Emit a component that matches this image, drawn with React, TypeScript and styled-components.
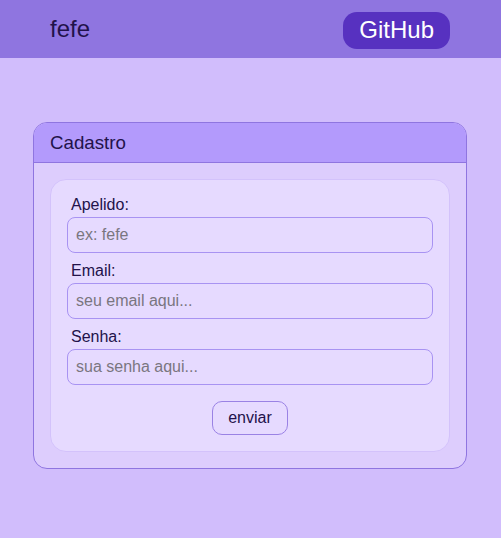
import React from "react";
import styled, { createGlobalStyle } from "styled-components";

const Global = createGlobalStyle`
  html, body { margin: 0; padding: 0; }
  body {
    background: #d1bdfc;
    font-family: "Liberation Sans", Arial, sans-serif;
    color: #22124a;
    min-height: 538px;
  }
  * { box-sizing: border-box; }
`;

const TopBar = styled.header`
  height: 58px;
  background: #8f75e0;
  display: flex;
  align-items: center;
  justify-content: space-between;
  padding: 0 51px 0 50px;
`;

const Brand = styled.span`
  font-size: 24px;
  color: #22124a;
`;

const GitHubLink = styled.a`
  display: inline-flex;
  align-items: center;
  height: 37px;
  padding: 0 16px;
  margin-top: 2px;
  border-radius: 14px;
  background: #5731c0;
  color: #ffffff;
  font-size: 24px;
  text-decoration: none;
`;

const Main = styled.main`
  display: flex;
  justify-content: flex-start;
  padding: 64px 0 0 33px;
`;

const Card = styled.section`
  width: 434px;
  border: 1px solid #8f75e0;
  border-radius: 14px;
  background: #ddcdfd;
  overflow: hidden;
`;

const CardHeader = styled.h3`
  margin: 0;
  height: 40px;
  display: flex;
  align-items: center;
  padding: 0 16px;
  background: #b39afc;
  border-bottom: 1px solid #8f75e0;
  font-size: 18.72px;
  font-weight: normal;
  color: #22124a;
`;

const CardBody = styled.div`
  padding: 16px;
`;

const Panel = styled.form`
  background: #e6daff;
  border: 1px solid #d3c2fb;
  border-radius: 16px;
  padding: 16px;
  display: flex;
  flex-direction: column;
`;

const Field = styled.div`
  display: flex;
  flex-direction: column;
  & + & { margin-top: 9px; }
`;

const Label = styled.label`
  font-size: 16px;
  line-height: 18px;
  padding-left: 4px;
  margin-bottom: 3px;
  color: #22124a;
`;

const Input = styled.input`
  height: 36px;
  width: 100%;
  border: 1px solid #a893f2;
  border-radius: 8px;
  background: #e6daff;
  padding: 0 8px;
  font-family: "Liberation Sans", Arial, sans-serif;
  font-size: 16px;
  color: #22124a;
  outline: none;
  &::placeholder { color: #7a7680; }
`;

const Submit = styled.button`
  align-self: center;
  margin-top: 16px;
  width: 76px;
  height: 34px;
  border: 1px solid #9a82e4;
  border-radius: 10px;
  background: #e6daff;
  font-family: "Liberation Sans", Arial, sans-serif;
  font-size: 16px;
  color: #22124a;
  padding: 0;
`;

export default function App() {
  return (
    <>
      <Global />
      <TopBar>
        <Brand>fefe</Brand>
        <GitHubLink href="#">GitHub</GitHubLink>
      </TopBar>
      <Main>
        <Card>
          <CardHeader>Cadastro</CardHeader>
          <CardBody>
            <Panel onSubmit={(e) => e.preventDefault()}>
              <Field>
                <Label>Apelido:</Label>
                <Input placeholder="ex: fefe" />
              </Field>
              <Field>
                <Label>Email:</Label>
                <Input placeholder="seu email aqui..." />
              </Field>
              <Field>
                <Label>Senha:</Label>
                <Input type="password" placeholder="sua senha aqui..." />
              </Field>
              <Submit type="submit">enviar</Submit>
            </Panel>
          </CardBody>
        </Card>
      </Main>
    </>
  );
}
